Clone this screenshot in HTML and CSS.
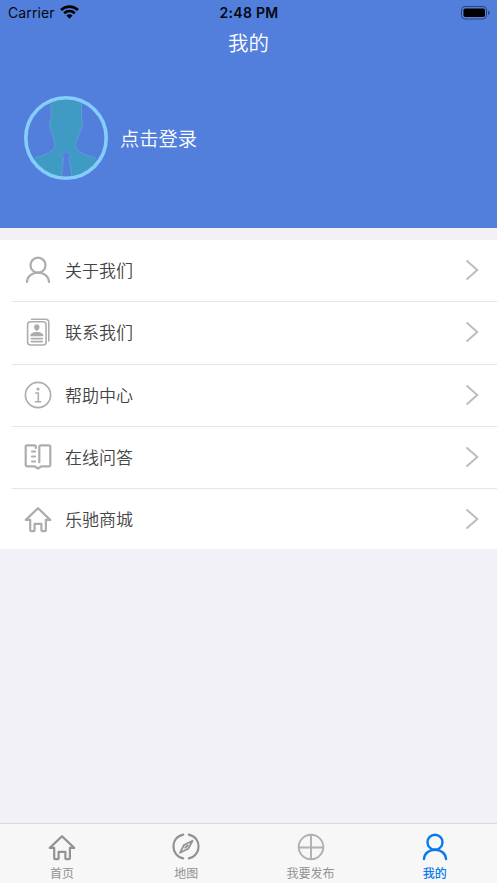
FILE: index.html
```html
<!DOCTYPE html>
<html lang="zh-CN">
<head>
<meta charset="utf-8">
<title>我的</title>
<link rel="stylesheet" href="styles.css">
</head>
<body>
<svg class="defs" aria-hidden="true">
  <symbol id="person" viewBox="0 0 30 30"><circle cx="15" cy="10.2" r="7.5"/><path d="M4 27C4.400 21.300 9 17.700 15 17.700S25.600 21.300 26 27"/></symbol>
  <symbol id="home" viewBox="0 0 30 30"><path d="M7.200 15.900H2.800L15 4.200L27.200 15.900H22.900V26.200Q22.900 27.200 21.900 27.200H19.300Q18.400 27.200 18.400 26.200V19.800H11.600V26.200Q11.600 27.200 10.700 27.200H8.200Q7.200 27.200 7.200 26.200Z"/></symbol>
  <symbol id="chevron" viewBox="0 0 14 22"><path d="M1.500 1.500L12.300 11L1.500 20.500"/></symbol>
</svg>
<div class="app">
  <header class="header">
    <div class="status">
      <div class="carrier"><span>Carrier</span>
        <svg class="wifi" viewBox="0 0 18 13"><path d="M1 4.600C5.600.2 12.400.2 17 4.600M4 7.600C7 4.900 11 4.900 14 7.600"/><path class="solid" d="M6.100 9.800Q9 7.600 11.900 9.800L9 12.800Z"/></svg>
      </div>
      <div class="clock">2:48 PM</div>
      <svg class="battery" viewBox="0 0 29 14"><rect class="shell" x=".5" y=".5" width="25" height="12.500" rx="3.500"/><rect x="2.500" y="2.500" width="21.500" height="8.500" rx="1.800"/><path class="cap" d="M27 4.500Q28.600 5 28.600 6.800T27 9Z"/></svg>
    </div>
    <h1 class="title">我的</h1>
    <div class="profile">
      <svg class="avatar" viewBox="0 0 84 84">
        <clipPath id="disc"><circle cx="42" cy="42" r="40"/></clipPath>
        <path class="bust" clip-path="url(#disc)" d="M26 0H58.500L57.500 22L59 27Q58 34 55.500 37Q54 44 51 48L54 55Q63 60 72 62L84 84H47.500L45 61L46.500 58L42 55.500L37.500 58L39.500 61L37.500 84H0L11 62Q24 58 30 53L31 48Q29 43 28 37Q25 33 25.500 27L27 22Z"/>
        <path class="tie" d="M42 55.500L46.500 58L45 62L48 81M42 55.500L37.500 58L39.500 62L37.500 81M27 5V22L25.500 27Q25 33 28 37L31 48L30 53Q24 58 11 62M57.500 5V22L59 27Q58 34 55.500 37Q54 44 51 48L54 55Q63 60 72 62"/>
        <circle class="ring" cx="42" cy="42" r="40.200"/>
      </svg>
      <span class="login">点击登录</span>
    </div>
  </header>
  <main class="list">
    <a class="row"><svg class="icon"><use href="#person"/></svg><span class="label">关于我们</span><svg class="chevron"><use href="#chevron"/></svg></a>
    <a class="row"><svg class="icon card" viewBox="0 0 30 30"><path d="M8.500 2.200H22.500Q25.800 2.200 25.800 5.500V24"/><rect x="4.600" y="4.800" width="18.500" height="23.200" rx="3"/><path d="M8.300 21.600H19.300M8.300 24.600H19.300"/><path class="solid" d="M13.800 7.200C17.800 7.200 17.100 13.200 13.800 13.700C10.500 13.200 9.800 7.200 13.800 7.200ZM7.400 19.200V17.300Q9.600 15 13.800 14.700Q18 15 20.200 17.300V19.200Z"/></svg><span class="label">联系我们</span><svg class="chevron"><use href="#chevron"/></svg></a>
    <a class="row"><svg class="icon info" viewBox="0 0 30 30"><circle cx="15" cy="15" r="12.600"/><path d="M12.800 13H15.300V21.700M12.500 21.800H17.700"/><circle class="solid" cx="15" cy="9" r="1.600"/></svg><span class="label">帮助中心</span><svg class="chevron"><use href="#chevron"/></svg></a>
    <a class="row"><svg class="icon" viewBox="0 0 30 30"><path d="M12.800 6V4.500Q12.800 3.300 11.300 3.300H4Q2.700 3.300 2.700 4.600V23Q2.700 24.300 4 24.300H11.500L15 26.500L18.500 24.300H26Q27.300 24.300 27.300 23V4.600Q27.300 3.300 26 3.300H18Q16.300 3.300 16.300 5V20.200M9 9.500H12M9 14.500H12M9 19.500H12"/></svg><span class="label">在线问答</span><svg class="chevron"><use href="#chevron"/></svg></a>
    <a class="row"><svg class="icon"><use href="#home"/></svg><span class="label">乐驰商城</span><svg class="chevron"><use href="#chevron"/></svg></a>
  </main>
  <nav class="tabs">
    <a class="tab"><svg class="icon"><use href="#home"/></svg><span>首页</span></a>
    <a class="tab"><svg class="icon" viewBox="0 0 30 30"><path d="M12.200 2.600C-.8 5-.8 23.700 12.200 26.400M17.800 2.600C30.800 5 30.800 23.700 17.800 26.400"/><path class="needle" d="M21.500 8.800L17.200 16.800L9 20.700L13 13ZM14.300 15.700L16.500 13.500"/></svg><span>地图</span></a>
    <a class="tab"><svg class="icon plus" viewBox="0 0 30 30"><circle cx="15" cy="15" r="12.300"/><path d="M15 3V27M3 15.500H27"/></svg><span>我要发布</span></a>
    <a class="tab active"><svg class="icon"><use href="#person"/></svg><span>我的</span></a>
  </nav>
</div>
</body>
</html>
```
FILE: styles.css
```css
* { box-sizing: border-box; }
body { margin: 0; background: #f1f1f7; font-family: "Noto Sans CJK SC", sans-serif; font-weight: 350; }
.defs { display: none; }
.app { display: flex; flex-direction: column; height: 883px; width: 497px; }
.header { height: 228px; background: #527edc; color: #fff; }
.status { display: grid; grid-template-columns: 1fr auto 1fr; align-items: center; height: 26px; padding: 0 7px 0 8px; color: #05080f; font-family: Inter, sans-serif; font-size: 14px; line-height: 26px; }
.carrier { display: flex; align-items: center; gap: 5px; font-weight: 400; letter-spacing: .1px; }
.wifi { width: 19px; height: 14px; margin-bottom: 2px; fill: none; stroke: #000; stroke-width: 2.600; }
.wifi .solid { fill: #000; stroke: none; }
.clock { font-weight: 600; letter-spacing: .3px; }
.battery { justify-self: end; width: 29px; height: 14px; margin-bottom: 1px; }
.shell { fill: none; stroke: #2c4478; }
.cap { fill: #2c4478; }
.title { margin: 0; height: 34px; line-height: 32px; font-size: 20.500px; font-weight: 350; text-align: center; }
.profile { display: flex; align-items: center; gap: 12px; padding: 36px 0 0 24px; }
.avatar { width: 84px; height: 84px; }
.bust { fill: #409bc4; }
.tie { fill: none; stroke: #659bdc; stroke-width: .8; }
.ring { fill: none; stroke: #85cdfb; stroke-width: 3.600; }
.login { font-size: 19.300px; line-height: 28px; }
.list { margin-top: 12px; height: 309px; background: #fff; }
.row { display: flex; align-items: center; height: 62.300px; margin-left: 12px; padding: 0 18px 1px 10px; border-bottom: 1.800px solid #e5e5e8; }
.row:last-child { height: 59.800px; padding-bottom: 0; border-bottom: 0; }
.icon { width: 30px; height: 30px; fill: none; stroke: currentColor; stroke-width: 2.200; stroke-linecap: round; stroke-linejoin: round; overflow: visible; }
.row .icon { color: #adadad; margin-left: .500px; }
.icon .solid { fill: currentColor; stroke: none; }
.label { margin-left: 12.500px; flex: 1; font-size: 17px; line-height: 24px; color: #444; }
.chevron { width: 14px; height: 22px; fill: none; stroke: #bdbdbd; stroke-width: 2; }
.tabs { display: grid; grid-template-columns: repeat(4, 1fr); height: 60px; margin-top: auto; border-top: 1px solid #d8d8dc; background: #f7f7f7; color: #929292; }
.tab { display: flex; flex-direction: column; align-items: center; padding-top: 7.500px; font-size: 12px; line-height: 18px; font-weight: 400; }
.tab span { margin-top: 2.500px; }
.needle { stroke-width: 1.800; }
.icon.plus { stroke: #b0b0b0; stroke-width: 1.900; }
.active { color: #087aef; font-weight: 500; }
.active .icon { stroke-width: 2.400; }
.row .card, .row .info { stroke-width: 1.600; }
```
